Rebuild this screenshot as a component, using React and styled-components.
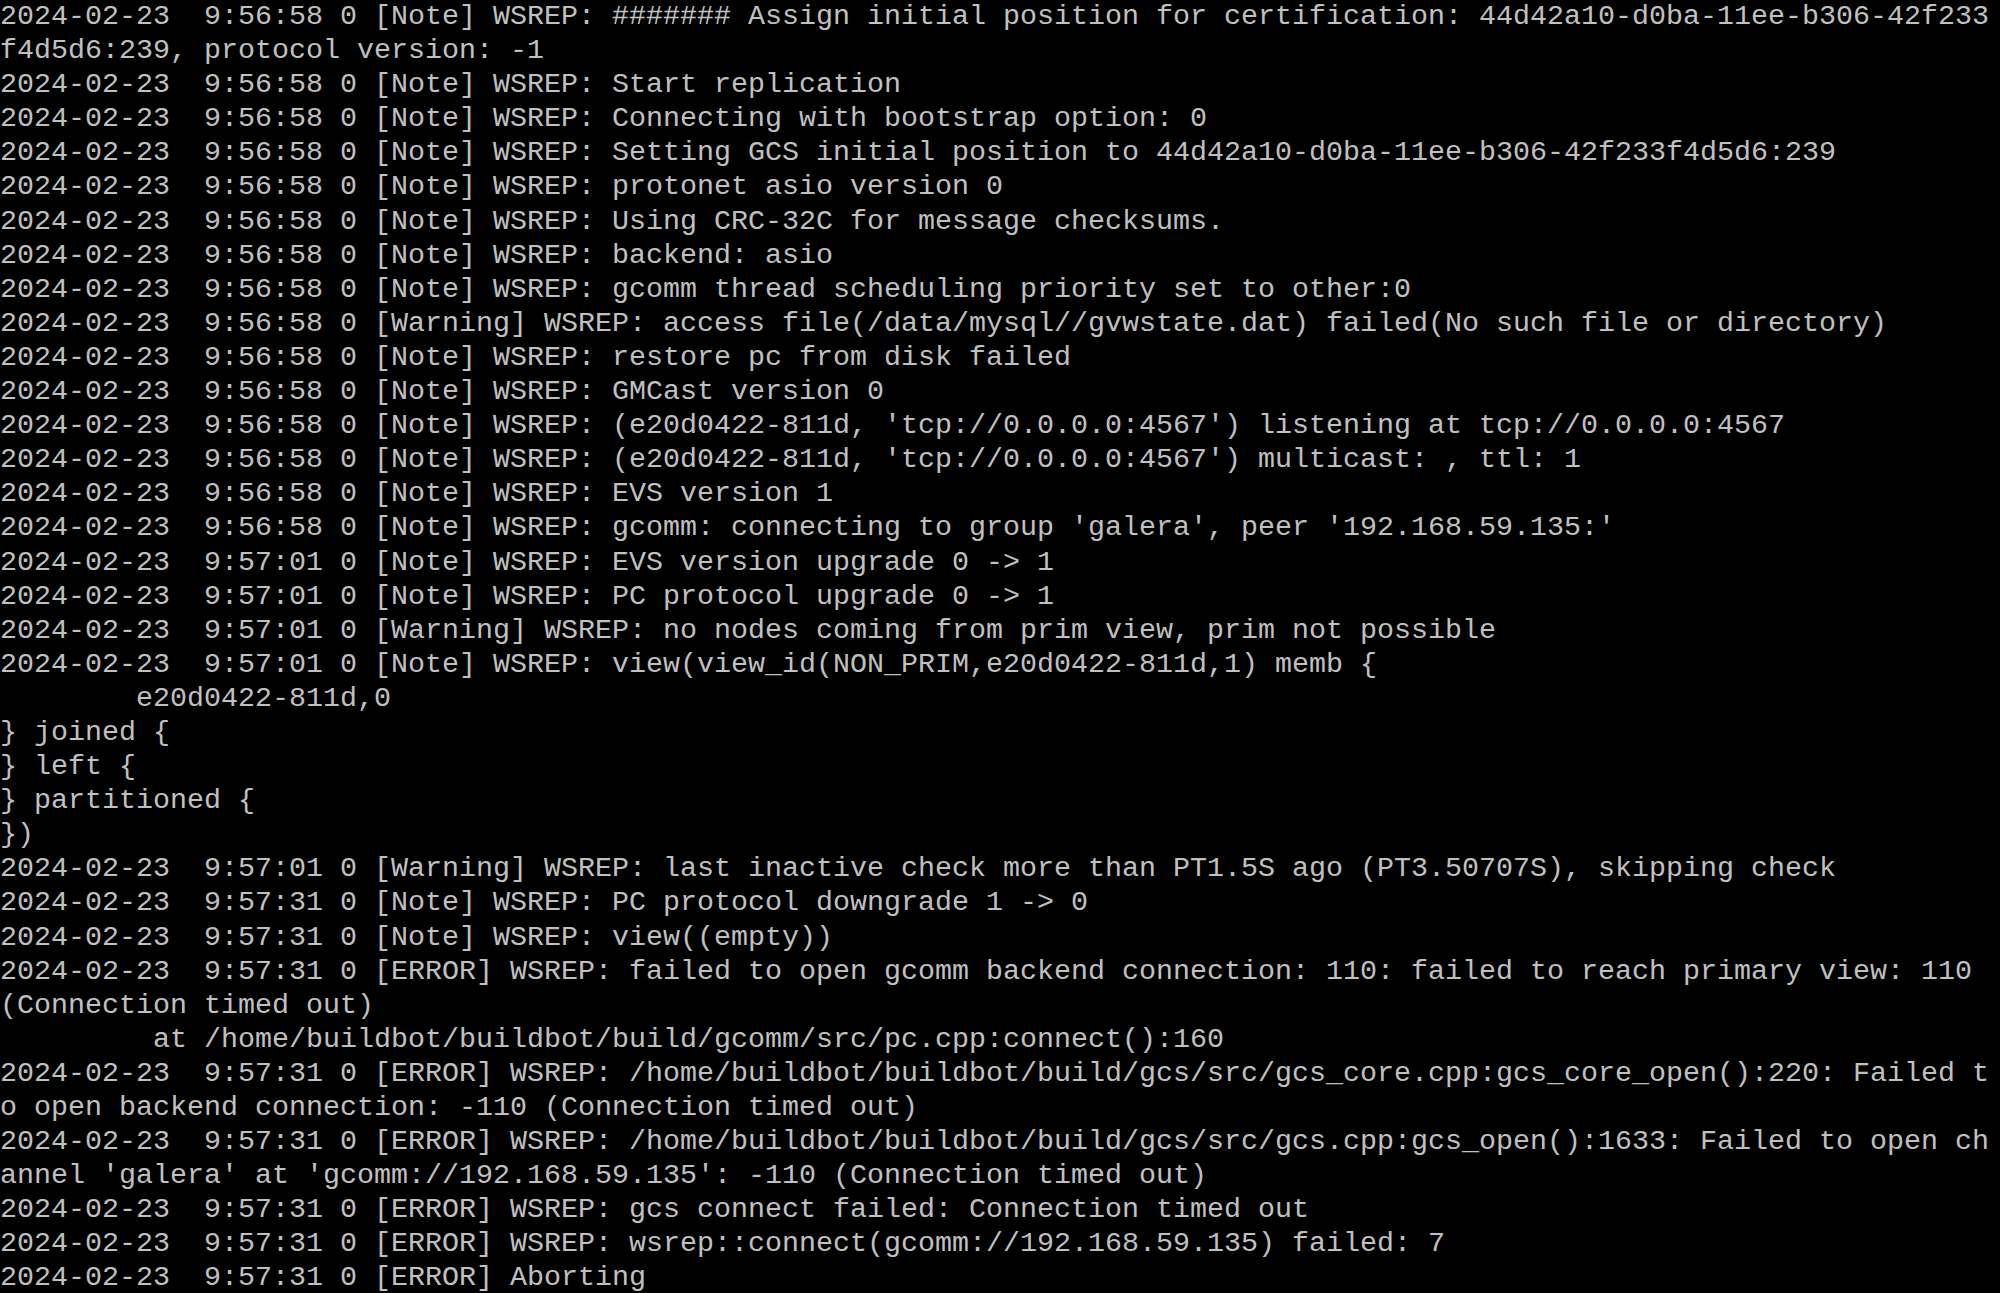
import React from 'react';
import styled, { createGlobalStyle } from 'styled-components';

const Global = createGlobalStyle`
    html, body {
        margin: 0;
        padding: 0;
        background: #000000;
    }
`;

const Screen = styled.div`
    width: 2000px;
    height: 1293px;
    overflow: hidden;
    background: #000000;
    color: #c0c0c0;
    font-family: "Liberation Mono", "Courier New", monospace;
    font-size: 28.333px;
    line-height: 34.1px;
`;

const Line = styled.div`
    white-space: pre;
    height: 34.1px;
`;

const lines = [
    "2024-02-23  9:56:58 0 [Note] WSREP: ####### Assign initial position for certification: 44d42a10-d0ba-11ee-b306-42f233",
    "f4d5d6:239, protocol version: -1",
    "2024-02-23  9:56:58 0 [Note] WSREP: Start replication",
    "2024-02-23  9:56:58 0 [Note] WSREP: Connecting with bootstrap option: 0",
    "2024-02-23  9:56:58 0 [Note] WSREP: Setting GCS initial position to 44d42a10-d0ba-11ee-b306-42f233f4d5d6:239",
    "2024-02-23  9:56:58 0 [Note] WSREP: protonet asio version 0",
    "2024-02-23  9:56:58 0 [Note] WSREP: Using CRC-32C for message checksums.",
    "2024-02-23  9:56:58 0 [Note] WSREP: backend: asio",
    "2024-02-23  9:56:58 0 [Note] WSREP: gcomm thread scheduling priority set to other:0",
    "2024-02-23  9:56:58 0 [Warning] WSREP: access file(/data/mysql//gvwstate.dat) failed(No such file or directory)",
    "2024-02-23  9:56:58 0 [Note] WSREP: restore pc from disk failed",
    "2024-02-23  9:56:58 0 [Note] WSREP: GMCast version 0",
    "2024-02-23  9:56:58 0 [Note] WSREP: (e20d0422-811d, 'tcp://0.0.0.0:4567') listening at tcp://0.0.0.0:4567",
    "2024-02-23  9:56:58 0 [Note] WSREP: (e20d0422-811d, 'tcp://0.0.0.0:4567') multicast: , ttl: 1",
    "2024-02-23  9:56:58 0 [Note] WSREP: EVS version 1",
    "2024-02-23  9:56:58 0 [Note] WSREP: gcomm: connecting to group 'galera', peer '192.168.59.135:'",
    "2024-02-23  9:57:01 0 [Note] WSREP: EVS version upgrade 0 -> 1",
    "2024-02-23  9:57:01 0 [Note] WSREP: PC protocol upgrade 0 -> 1",
    "2024-02-23  9:57:01 0 [Warning] WSREP: no nodes coming from prim view, prim not possible",
    "2024-02-23  9:57:01 0 [Note] WSREP: view(view_id(NON_PRIM,e20d0422-811d,1) memb {",
    "        e20d0422-811d,0",
    "} joined {",
    "} left {",
    "} partitioned {",
    "})",
    "2024-02-23  9:57:01 0 [Warning] WSREP: last inactive check more than PT1.5S ago (PT3.50707S), skipping check",
    "2024-02-23  9:57:31 0 [Note] WSREP: PC protocol downgrade 1 -> 0",
    "2024-02-23  9:57:31 0 [Note] WSREP: view((empty))",
    "2024-02-23  9:57:31 0 [ERROR] WSREP: failed to open gcomm backend connection: 110: failed to reach primary view: 110",
    "(Connection timed out)",
    "         at /home/buildbot/buildbot/build/gcomm/src/pc.cpp:connect():160",
    "2024-02-23  9:57:31 0 [ERROR] WSREP: /home/buildbot/buildbot/build/gcs/src/gcs_core.cpp:gcs_core_open():220: Failed t",
    "o open backend connection: -110 (Connection timed out)",
    "2024-02-23  9:57:31 0 [ERROR] WSREP: /home/buildbot/buildbot/build/gcs/src/gcs.cpp:gcs_open():1633: Failed to open ch",
    "annel 'galera' at 'gcomm://192.168.59.135': -110 (Connection timed out)",
    "2024-02-23  9:57:31 0 [ERROR] WSREP: gcs connect failed: Connection timed out",
    "2024-02-23  9:57:31 0 [ERROR] WSREP: wsrep::connect(gcomm://192.168.59.135) failed: 7",
    "2024-02-23  9:57:31 0 [ERROR] Aborting",
];

export default function App() {
    return (
        <>
            <Global />
            <Screen>
                {lines.map((text, i) => (
                    <Line key={i}>{text}</Line>
                ))}
            </Screen>
        </>
    );
}
